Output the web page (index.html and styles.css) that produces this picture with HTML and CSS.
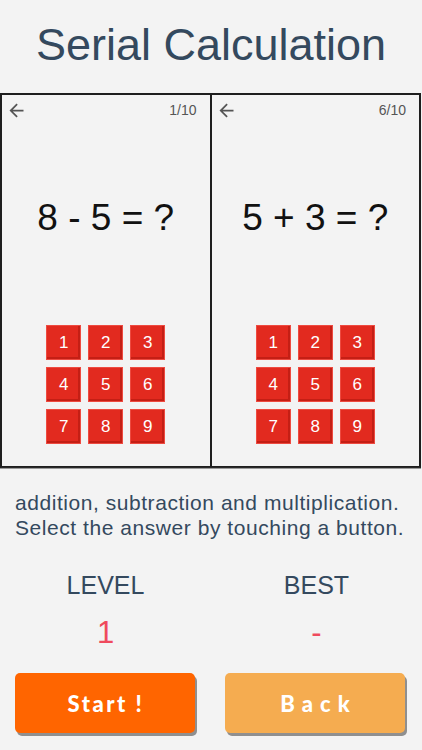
FILE: index.html
```html
<!DOCTYPE html>
<html lang="en">
<head>
<meta charset="utf-8">
<title>Serial Calculation</title>
<link rel="stylesheet" href="styles.css">
</head>
<body>
<h1 class="title">Serial Calculation</h1>
<div class="panels">
  <div class="panel">
    <div class="panel-head">
      <svg class="back-icon" viewBox="0 0 24 24" width="21" height="21"><path d="M20 11H7.83l5.59-5.59L12 4l-8 8 8 8 1.41-1.41L7.83 13H20v-2z" fill="#555"/></svg>
      <span class="counter">1/10</span>
    </div>
    <div class="equation">8 - 5 = ?</div>
    <div class="keypad">
      <span class="key">1</span><span class="key">2</span><span class="key">3</span>
      <span class="key">4</span><span class="key">5</span><span class="key">6</span>
      <span class="key">7</span><span class="key">8</span><span class="key">9</span>
    </div>
  </div>
  <div class="panel">
    <div class="panel-head">
      <svg class="back-icon" viewBox="0 0 24 24" width="21" height="21"><path d="M20 11H7.83l5.59-5.59L12 4l-8 8 8 8 1.41-1.41L7.83 13H20v-2z" fill="#555"/></svg>
      <span class="counter">6/10</span>
    </div>
    <div class="equation">5 + 3 = ?</div>
    <div class="keypad">
      <span class="key">1</span><span class="key">2</span><span class="key">3</span>
      <span class="key">4</span><span class="key">5</span><span class="key">6</span>
      <span class="key">7</span><span class="key">8</span><span class="key">9</span>
    </div>
  </div>
</div>
<p class="desc">addition, subtraction and multiplication.<br>Select the answer by touching a button.</p>
<div class="stats">
  <div class="stat">
    <div class="stat-label">LEVEL</div>
    <div class="stat-value">1</div>
  </div>
  <div class="stat">
    <div class="stat-label">BEST</div>
    <div class="stat-value">-</div>
  </div>
</div>
<div class="actions">
  <button class="btn btn-start">Start !</button>
  <button class="btn btn-back">Back</button>
</div>
</body>
</html>
```
FILE: styles.css
```css
html, body {
  margin: 0;
  padding: 0;
  background: #f3f3f3;
}
body {
  width: 422px;
  height: 750px;
  overflow: hidden;
  font-family: "Liberation Sans", Arial, sans-serif;
  color: #34495e;
}
.title {
  margin: 0;
  height: 93px;
  line-height: 90px;
  font-size: 45px;
  font-weight: normal;
  text-align: center;
  color: #34495e;
}
.panels {
  display: grid;
  grid-template-columns: 1fr 1fr;
  width: 421px;
  height: 375px;
  box-sizing: border-box;
  border: 1px solid #1e1e1e;
  border-bottom-color: #2a2a2a;
  box-shadow: 0 1px 0 #9a9a9a;
}
.panel {
  border: 1px solid #1e1e1e;
  display: flex;
  flex-direction: column;
  padding-top: 5px;
}
.panel-head {
  height: 20px;
  display: flex;
  align-items: center;
  justify-content: space-between;
  padding: 0 13px 0 4px;
}
.back-icon {
  display: block;
}
.counter {
  font-size: 14px;
  color: #555;
}
.equation {
  margin-top: 76px;
  height: 44px;
  line-height: 44px;
  font-size: 37px;
  color: #111;
  text-align: center;
}
.keypad {
  margin: 85px auto 0;
  display: grid;
  grid-template-columns: repeat(3, 35px);
  grid-auto-rows: 35px;
  gap: 7px;
}
.key {
  display: flex;
  align-items: center;
  justify-content: center;
  background: #e22a1f;
  color: #fff;
  font-size: 17px;
  box-sizing: border-box;
  border: 1px solid #ee4a40;
  box-shadow: inset -2px -2px 0 #c41f15;
}
.desc {
  margin: 0;
  padding: 22px 0 0 15px;
  font-size: 21px;
  letter-spacing: 0.55px;
  line-height: 25px;
  color: #34495e;
  white-space: nowrap;
}
.stats {
  display: grid;
  grid-template-columns: 211px 211px;
  margin-top: 30px;
  text-align: center;
}
.stat-label {
  font-size: 25px;
  line-height: 30px;
  color: #34495e;
}
.stat-value {
  margin-top: 15px;
  font-size: 31px;
  line-height: 36px;
  color: #ef4a5d;
}
.actions {
  display: flex;
  gap: 30px;
  padding-left: 15px;
  margin-top: 22px;
}
.btn {
  width: 180px;
  height: 60px;
  border: none;
  border-radius: 5px;
  color: #fff;
  font-family: "Lato", "Noto Sans", sans-serif;
  font-weight: 900;
  font-size: 22px;
  box-shadow: 2px 3px 0 #8f8f8f;
  padding: 0;
}
.btn-start {
  background: #ff6500;
  letter-spacing: 2.5px;
  text-indent: 2px;
}
.btn-back {
  background: #f5ac50;
  letter-spacing: 7px;
  text-indent: 7px;
}
```
